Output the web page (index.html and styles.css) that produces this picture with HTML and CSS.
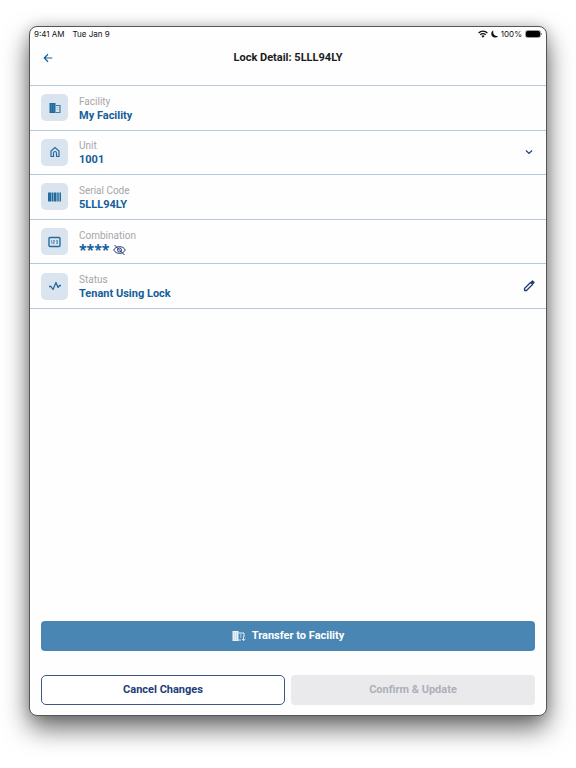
FILE: index.html
```
<!DOCTYPE html>
<html lang="en">
<head>
<meta charset="utf-8">
<meta name="viewport" content="width=device-width, initial-scale=1">
<title>Lock Detail</title>
<link rel="stylesheet" href="styles.css">
</head>
<body>
<div class="device">
  <div class="status-bar">
    <div class="status-group"><span>9:41 AM</span><span>Tue Jan 9</span></div>
    <div class="status-icons">
      <svg width="10" height="8" viewBox="0 0 20 16" fill="none" stroke="#111" stroke-width="2.6"><path d="M1.200 6a12.500 12.500 0 0 1 17.600 0M4.600 9.600a7.600 7.600 0 0 1 10.800 0"/><path d="M10 15.500 6.800 12.200a4.500 4.500 0 0 1 6.400 0z" fill="#111" stroke="none"/></svg>
      <svg width="7" height="8" viewBox="0 0 14 16" fill="#111"><path d="M4.500 1C2 2.200.5 4.700.5 7.500.5 11.700 3.800 15 8 15c2.500 0 4.700-1.200 6-3.200C8 13 3.200 8.500 4.500 1z"/></svg>
      <span>100%</span>
      <svg width="17" height="8" viewBox="0 0 17 8"><rect x=".5" y=".5" width="15" height="7" rx="2" fill="#fff" stroke="#999"/><rect x="1" y="1" width="14" height="6" rx="1.500" fill="#000"/><path d="M16.500 3v2" stroke="#999"/></svg>
    </div>
  </div>
  <header class="header">
    <a class="back" href="#" aria-label="Back"><svg width="10" height="10" viewBox="0 0 20 20" fill="none" stroke="#17609a" stroke-width="2.400"><path d="M18.500 10H3M10 2.500 2.500 10l7.500 7.500"/></svg></a>
    <h1 class="title">Lock Detail: 5LLL94LY</h1>
  </header>
  <main class="content">
    <section class="details">
      <div class="row">
        <span class="tile"><svg width="12" height="12" viewBox="0 0 24 24"><path fill="#236a9f" d="M1 2h12v20H1z"/><path d="M13 7h9v14h-9" fill="none" stroke="#3a7cab" stroke-width="2.400"/><path d="M4 6h2M8 6h2M4 10h2M8 10h2M4 14h2M8 14h2M4 18h2M8 18h2" stroke="#6697bc" stroke-width="1.500"/><path d="M15 11h4M15 15h4" stroke="#a5c1d8" stroke-width="2"/></svg></span>
        <div class="field"><span class="label">Facility</span><span class="value">My Facility</span></div>
      </div>
      <div class="row">
        <span class="tile"><svg width="12" height="12" viewBox="0 0 24 24" fill="none" stroke="#236a9f" stroke-width="2.400"><path d="M4 21V10l8-7 8 7v11h-5v-7a3 3 0 0 0-6 0v7z"/></svg></span>
        <div class="field"><label class="label" for="unit">Unit</label><select class="value unit" id="unit"><option>1001</option></select></div>
        <svg class="chevron" width="8" height="8" viewBox="0 0 16 16" fill="none" stroke="#203d79" stroke-width="2.400"><path d="m2 5 6 6 6-6"/></svg>
      </div>
      <div class="row">
        <span class="tile"><svg width="13" height="10" viewBox="0 0 26 20" fill="#236a9f"><path d="M0 1h6v18H0zM7 1h4v18H7zM12 1h5v18h-5zM18.500 1h3v18h-3zM23 1h3v18h-3z"/></svg></span>
        <div class="field"><span class="label">Serial Code</span><span class="value">5LLL94LY</span></div>
      </div>
      <div class="row">
        <span class="tile"><svg width="13" height="12" viewBox="0 0 26 24" fill="none" stroke="#236a9f"><rect x="2" y="3" width="22" height="18" rx="2" stroke-width="2.800"/><path d="M6 10l1.500-1v6M10 9h3v3h-3v3h3M16 9h3v6h-3M16 12h3" stroke-width="1.200"/></svg></span>
        <div class="field"><span class="label">Combination</span>
          <div class="secret"><span class="value stars">****</span>
          <button class="icon-button" type="button" aria-label="Show combination"><svg width="13" height="12" viewBox="0 0 26 24" fill="none" stroke="#203d79" stroke-width="2"><path d="M1.500 12c4-9 19-9 23 0-4 9-19 9-23 0zM3 2l20 20"/><circle cx="13" cy="12" r="4"/></svg></button></div>
        </div>
      </div>
      <div class="row">
        <span class="tile"><svg width="14" height="12" viewBox="0 0 28 24" fill="none" stroke="#236a9f" stroke-width="2.600" stroke-linejoin="round"><path d="M2 13h4l4 6 6-14 4 10 3-4h3"/></svg></span>
        <div class="field"><span class="label">Status</span><span class="value">Tenant Using Lock</span></div>
        <button class="icon-button" type="button" aria-label="Edit status"><svg width="12" height="12" viewBox="0 0 24 24" fill="none" stroke="#203d79" stroke-width="2.600" stroke-linejoin="round"><path d="M3 21v-4L15 5l4 4L7 21z"/><path d="m17 4 2-2 3 3-2 2z" fill="#203d79"/></svg></button>
      </div>
    </section>
    <div class="actions">
      <button class="button primary" type="button"><svg width="14" height="12" viewBox="0 0 28 24"><path fill="#e9f2f8" d="M1 2h12v20H1z"/><path d="M13 6h11v8M13 20h5" fill="none" stroke="#e9f2f8" stroke-width="2"/><path d="M4 6h2M8 6h2M4 10h2M8 10h2M4 14h2M8 14h2M4 18h2M8 18h2" stroke="#8db5d1" stroke-width="1.500"/><path d="M16 10h3M16 14h3M23 13v8M20 18l3 3 4-3" fill="none" stroke="#e9f2f8" stroke-width="1.800"/></svg>Transfer to Facility</button>
      <div class="choices">
        <button class="button outline" type="button">Cancel Changes</button>
        <button class="button" type="button" disabled>Confirm &amp; Update</button>
      </div>
    </div>
  </main>
</div>
</body>
</html>
```
FILE: styles.css
```
* { box-sizing: border-box; }

body {
  margin: 0;
  min-height: 100vh;
  display: flex;
  padding: 26px 29px 52px;
  background: #fff;
  font-family: Roboto, "Liberation Sans", sans-serif;
  font-size: 11px;
  line-height: 14px;
  overflow-x: hidden;
}

.device {
  flex: 1;
  display: flex;
  flex-direction: column;
  background: #fefefe;
  border: 1px solid #555;
  border-radius: 8px;
  box-shadow: 0 12px 26px rgba(0, 0, 0, 0.6), 0 0 12px rgba(0, 0, 0, 0.15);
}

.status-bar {
  display: flex;
  justify-content: space-between;
  padding: 0 4px;
  font: 8px/14px Inter, sans-serif;
  color: #111;
}

.status-group { display: flex; gap: 8px; }
.status-icons { display: flex; align-items: center; gap: 3px; }

.header {
  display: grid;
  grid-template-columns: 32px 1fr 32px;
  align-items: center;
  height: 44px;
  padding: 0 2px 10px;
}

.back { display: flex; justify-content: center; }

.title {
  margin: 0;
  text-align: center;
  font-size: 11px;
  font-weight: 700;
  color: #1c1c20;
}

.content { flex: 1; display: flex; flex-direction: column; }

.details {
  display: grid;
  grid-auto-rows: 1fr;
  min-height: 224px;
  border-top: 1px solid #b5c9da;
}

.row {
  position: relative;
  display: flex;
  align-items: center;
  gap: 11px;
  padding: 0 11px;
  border-bottom: 1px solid #b5c9da;
}

.tile {
  display: grid;
  place-items: center;
  width: 27px;
  height: 27px;
  border-radius: 5px;
  background: #d9e4ee;
}

.field { flex: 1; display: flex; flex-direction: column; padding-top: 2px; }
.label { font-size: 10px; color: #a5a6aa; }
.value { font-weight: 700; color: #13609a; }

.unit {
  appearance: none;
  width: 100%;
  margin: 0;
  padding: 0;
  border: 0;
  background: transparent;
  font: inherit;
  font-weight: 700;
}

.chevron { position: absolute; right: 13px; pointer-events: none; }
.secret { display: flex; align-items: center; gap: 4px; height: 14px; }
.stars { font-family: "Noto Sans", sans-serif; font-size: 14px; }

.icon-button {
  display: flex;
  padding: 0;
  border: 0;
  background: none;
}

.actions {
  display: grid;
  gap: 24px;
  margin-top: auto;
  padding: 0 11px 10px;
}

.choices { display: grid; grid-template-columns: 1fr 1fr; gap: 6px; }

.button {
  display: flex;
  align-items: center;
  justify-content: center;
  gap: 6px;
  height: 30px;
  padding: 0;
  border: 0;
  border-radius: 4px;
  background: #eaeaec;
  font: 700 11px/14px Roboto, "Liberation Sans", sans-serif;
  color: #adb0b8;
}

.primary { background: #4a86b3; color: #fff; }
.outline { border: 1px solid #3e5789; border-radius: 5px; background: #fff; color: #203d79; }
```
